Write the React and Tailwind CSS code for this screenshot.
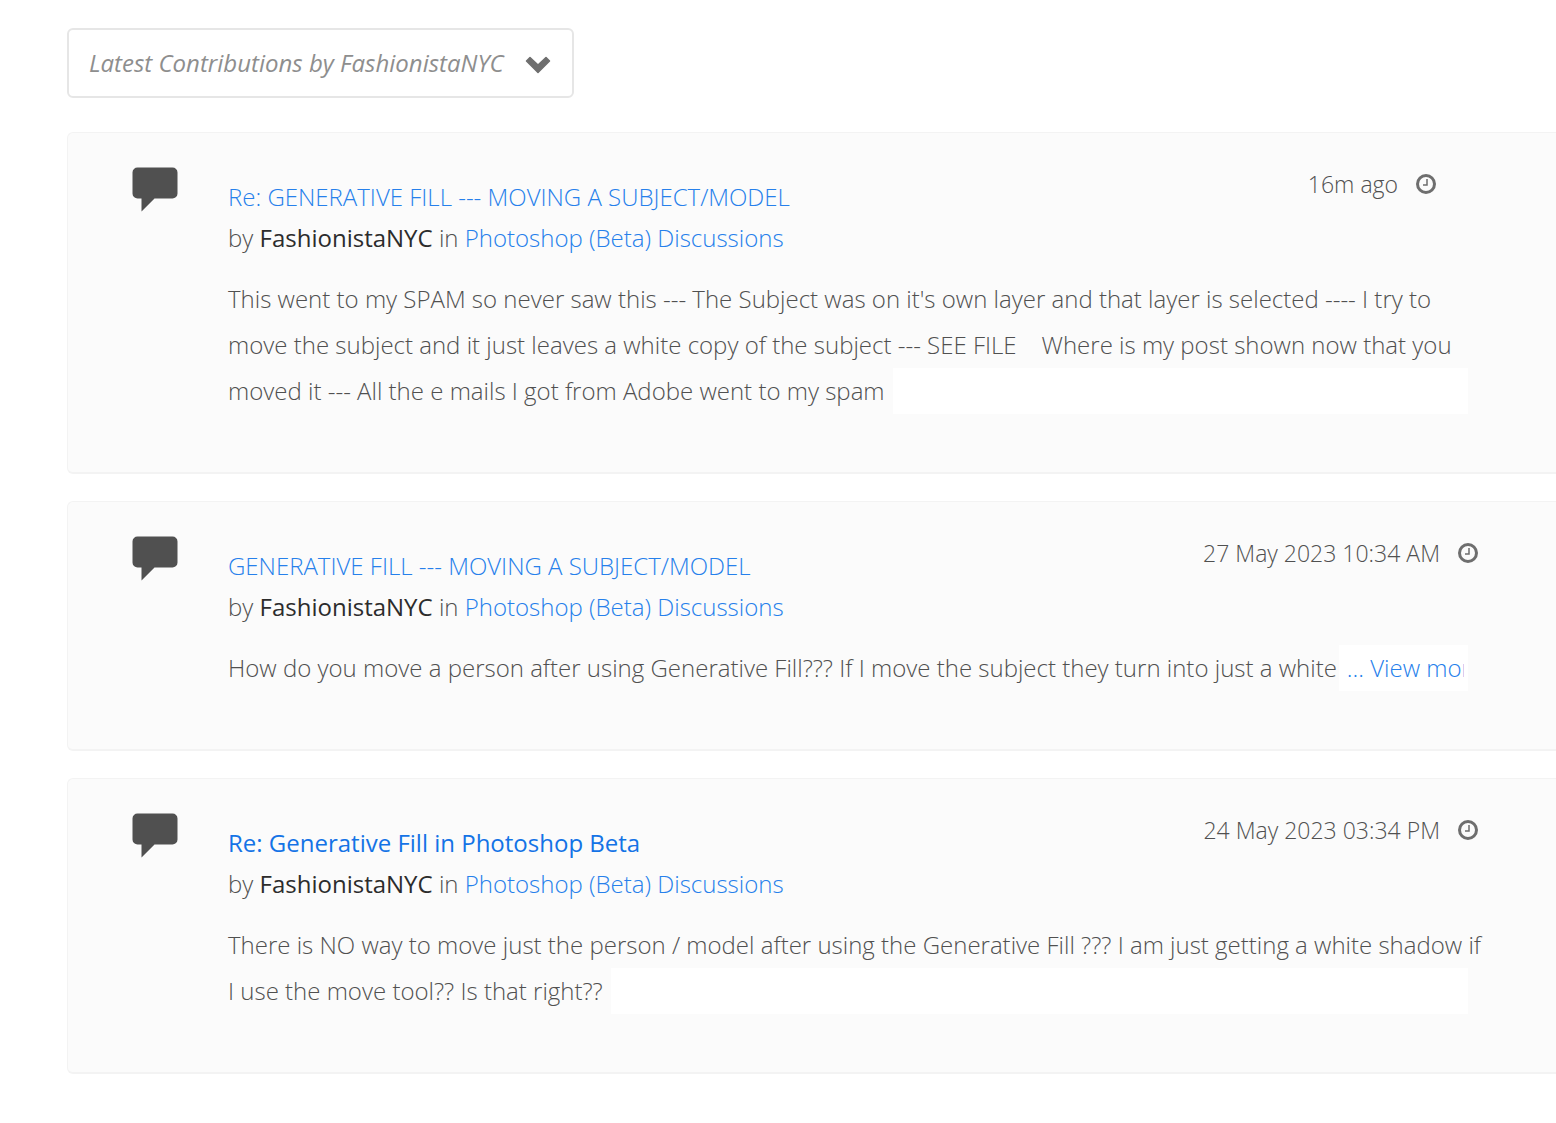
const POSTS = [
  {
    id: 1,
    title: "Re: GENERATIVE FILL --- MOVING A SUBJECT/MODEL",
    unread: false,
    date: "16m ago",
    recent: true,
    lines: [
      "This went to my SPAM so never saw this --- The Subject was on it's own layer and that layer is selected ---- I try to",
      "move the subject and it just leaves a white copy of the subject --- SEE FILE \u00a0\u00a0 Where is my post shown now that you",
      "moved it --- All the e mails I got from Adobe went to my spam",
    ],
    more: false,
  },
  {
    id: 2,
    title: "GENERATIVE FILL --- MOVING A SUBJECT/MODEL",
    unread: false,
    date: "27 May 2023 10:34 AM",
    lines: ["How do you move a person after using Generative Fill??? If I move the subject they turn into just a white"],
    more: true,
  },
  {
    id: 3,
    title: "Re: Generative Fill in Photoshop Beta",
    unread: true,
    date: "24 May 2023 03:34 PM",
    lines: [
      "There is NO way to move just the person / model after using the Generative Fill ??? I am just getting a white shadow if",
      "I use the move tool?? Is that right??",
    ],
    more: false,
  },
];

function CommentIcon() {
  return (
    <svg viewBox="0 0 46 45" className="w-[46px] h-[45px] shrink-0 fill-[#505050]" aria-hidden="true">
      <path d="M5.5 0.5H40.500a5 5 0 0 1 5 5V26.500a5 5 0 0 1-5 5H22.500L9.500 44.500V31.500H5.500A5 5 0 0 1 0.500 26.500V5.500A5 5 0 0 1 5.500 0.500Z" />
    </svg>
  );
}

function ClockIcon() {
  return (
    <svg viewBox="0 0 20 20" className="w-5 h-5 fill-none stroke-[#6e6e6e]" aria-hidden="true">
      <circle cx="10" cy="10" r="8.500" strokeWidth="3" />
      <path d="M11 5V11H7" strokeWidth="1.500" />
    </svg>
  );
}

function PostCard({ post }) {
  return (
    <article className="flex items-start rounded-l-md border border-r-0 border-b-2 border-[#f3f3f3] bg-[#fbfbfb] pt-[34px] pb-[58px] pl-16 pr-[88px]">
      <CommentIcon />
      <div className="ml-[50px] min-w-0 flex-1">
        <div className="flex items-start justify-between">
          <div className="pt-[9px] leading-[41px]">
            <h2>
              <a href="#" className={post.unread ? "font-normal text-[#1473e6]" : "text-[#2680eb]"}>{post.title}</a>
            </h2>
            <p>
              by <a href="#" className="font-normal text-[#2c2c2c]">FashionistaNYC</a> in{" "}
              <a href="#" className="text-[#2680eb]">Photoshop (Beta) Discussions</a>
            </p>
          </div>
          <div className={`flex items-center gap-[18px] text-[23px] leading-[34px] whitespace-nowrap ${post.recent ? "mr-8" : "-mr-2.5"}`}>
            <time>{post.date}</time>
            <ClockIcon />
          </div>
        </div>
        <div className="mt-[18px] leading-[46px] whitespace-nowrap">
          {post.lines.slice(0, -1).map((line) => (
            <p key={line}>{line}</p>
          ))}
          <div className="flex">
            <p>{post.lines[post.lines.length - 1]}</p>
            {/* cover after the last visible line */}
            <div className={`h-[46px] min-w-0 flex-1 bg-white ${post.more ? "ml-0.5" : "ml-2"}`}>
              {post.more && (
                <a href="#" className="ml-2 block w-[117px] overflow-hidden text-[#2680eb]">... View more</a>
              )}
            </div>
          </div>
        </div>
      </div>
    </article>
  );
}

export default function App() {
  return (
    <main className="min-h-screen overflow-hidden bg-white pt-7 pb-10 pl-[67px] font-['Open_Sans',sans-serif] text-2xl font-light text-[#505050]">
      <div className="relative flex w-fit">
        <select
          aria-label="Contributions"
          className="h-[70px] w-[507px] appearance-none rounded-md border-2 border-[#e6e6e6] bg-white pl-5 pr-16 font-normal italic text-[#8e8e8e]"
        >
          <option>Latest Contributions by FashionistaNYC</option>
        </select>
        <svg viewBox="0 0 26 18" className="pointer-events-none absolute right-[23px] top-[28px] h-[18px] w-[26px] fill-[#6e6e6e] stroke-[#6e6e6e]" aria-hidden="true">
          <path d="M1.500 5L5 1.500L13 9L21 1.500L24.500 5L13 16.500Z" strokeWidth="1.500" strokeLinejoin="round" />
        </svg>
      </div>
      <div className="mt-[34px] flex flex-col gap-[27px]">
        {POSTS.map((post) => (
          <PostCard key={post.id} post={post} />
        ))}
      </div>
    </main>
  );
}
